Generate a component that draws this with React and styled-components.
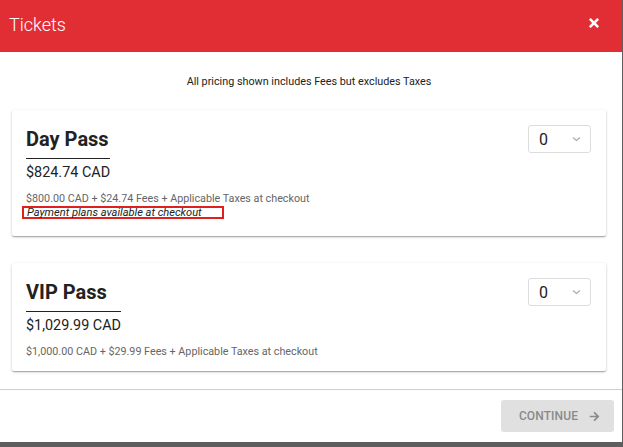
import React, { useState } from "react";
import styled, { createGlobalStyle } from "styled-components";
import { FaTimes, FaArrowRight } from "react-icons/fa";

const GlobalStyle = createGlobalStyle`
    html, body {
        margin: 0;
        padding: 0;
        background: #5e5e5e;
        font-family: Roboto, "Liberation Sans", sans-serif;
    }
    * { box-sizing: border-box; }
`;

const Modal = styled.div`
    width: 622px;
    height: 442px;
    background: #fff;
    display: flex;
    flex-direction: column;
`;

const Header = styled.div`
    height: 52px;
    flex-shrink: 0;
    background: #e12e35;
    color: #fff;
    display: flex;
    align-items: center;
    justify-content: space-between;
    padding: 0 21px 0 9px;
`;

const Title = styled.h2`
    margin: -2px 0 0;
    font-size: 18px;
    font-weight: 300;
    line-height: 24px;
`;

const CloseButton = styled.button`
    background: none;
    border: none;
    padding: 0;
    color: #fff;
    display: flex;
    cursor: pointer;
    margin-top: -6px;
`;

const Body = styled.div`
    flex: 1;
    padding: 22px 16px 0 12px;
    display: flex;
    flex-direction: column;
    gap: 27px;
`;

const Notice = styled.div`
    font-size: 10.8px;
    line-height: 16px;
    color: #222;
    text-align: center;
    margin-bottom: -7px;
`;

const Card = styled.div`
    background: #fff;
    border-radius: 2px;
    padding: 15px 15px ${p => p.bottom}px 14px;
    box-shadow: 0 1px 3px rgba(0,0,0,0.2), 0 1px 1px rgba(0,0,0,0.14), 0 2px 1px -1px rgba(0,0,0,0.12);
`;

const CardTop = styled.div`
    display: flex;
    justify-content: space-between;
    align-items: flex-start;
`;

const NameBlock = styled.div`
    display: inline-block;
`;

const PassName = styled.h3`
    margin: 2px 0 0;
    font-size: 20px;
    font-weight: 700;
    line-height: 24px;
    color: #222;
    padding-bottom: 7px;
    border-bottom: 1px solid #222;
    white-space: nowrap;
`;

const Price = styled.div`
    font-size: 14.4px;
    line-height: 20px;
    color: #222;
    margin-top: 4px;
    white-space: nowrap;
`;

const FeeLine = styled.div`
    font-size: 10.75px;
    line-height: 15px;
    color: #666;
    margin-top: 8px;
`;

const PlanNote = styled.div`
    width: 202px;
    margin-left: -4px;
    border: 2px solid #e0201f;
    padding: 0 0 0 3px;
    font-size: 11.1px;
    font-style: italic;
    line-height: 9px;
    color: #222;
    height: 13px;
    white-space: nowrap;
`;

const QtySelect = styled.div`
    width: 63px;
    height: 28px;
    border: 1px solid #dcdcdc;
    border-radius: 3px;
    display: flex;
    align-items: center;
    justify-content: space-between;
    padding: 0 9px 0 10px;
    font-size: 16px;
    color: #222;
`;

const Chevron = () => (
    <svg width="9" height="6" viewBox="0 0 9 6">
        <path d="M1 1.5 L4.5 4.5 L8 1.5" fill="none" stroke="#aaa" strokeWidth="1.1" />
    </svg>
);

const Footer = styled.div`
    height: 53px;
    flex-shrink: 0;
    border-top: 1px solid #cfcfcf;
    display: flex;
    justify-content: flex-end;
    align-items: flex-start;
    padding: 10px 8px 0 0;
`;

const ContinueButton = styled.button`
    width: 113px;
    height: 32px;
    border: none;
    border-radius: 3px;
    background: #e0e0e0;
    color: #8a8a8a;
    font-family: Roboto, "Liberation Sans", sans-serif;
    font-size: 12px;
    font-weight: 500;
    letter-spacing: 0.1px;
    display: flex;
    align-items: center;
    justify-content: center;
    gap: 11px;
    padding: 0 0 0 4px;
`;

const passes = [
    { name: "Day Pass", price: "$824.74 CAD", fees: "$800.00 CAD + $24.74 Fees + Applicable Taxes at checkout", plan: true },
    { name: "VIP Pass", price: "$1,029.99 CAD", fees: "$1,000.00 CAD + $29.99 Fees + Applicable Taxes at checkout", plan: false },
];

const App = () => {
    const [qty] = useState([0, 0]);

    return (
        <Modal>
            <GlobalStyle />
            <Header>
                <Title>Tickets</Title>
                <CloseButton><FaTimes size={14} /></CloseButton>
            </Header>
            <Body>
                <Notice>All pricing shown includes Fees but excludes Taxes</Notice>
                {passes.map((pass, i) => (
                    <Card key={pass.name} bottom={pass.plan ? 17 : 12}>
                        <CardTop>
                            <NameBlock>
                                <PassName>{pass.name}</PassName>
                                <Price>{pass.price}</Price>
                            </NameBlock>
                            <QtySelect>{qty[i]} <Chevron /></QtySelect>
                        </CardTop>
                        <FeeLine>{pass.fees}</FeeLine>
                        {pass.plan && <PlanNote>Payment plans available at checkout</PlanNote>}
                    </Card>
                ))}
            </Body>
            <Footer>
                <ContinueButton>CONTINUE <FaArrowRight size={11} /></ContinueButton>
            </Footer>
        </Modal>
    );
};

export default App;
